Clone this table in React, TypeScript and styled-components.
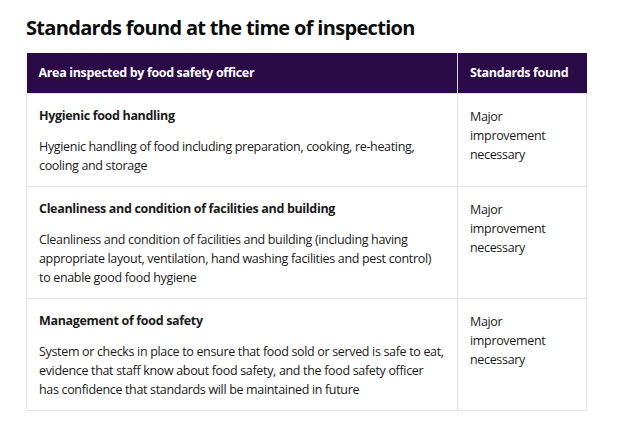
import React from "react";
import styled, { createGlobalStyle } from "styled-components";

const Global = createGlobalStyle`
  html, body { margin: 0; padding: 0; background: #ffffff; }
  body { font-family: "Open Sans", "Liberation Sans", sans-serif; color: #1a1a1a; }
`;

const Page = styled.div`
  padding: 13px 0 0 26px;
  width: 560px;
`;

const Title = styled.h2`
  margin: 0 0 10px 0;
  font-size: 20px;
  line-height: 30px;
  font-weight: 700;
  color: #0b0c0c;
  letter-spacing: -0.68px;
`;

const Table = styled.table`
  width: 560px;
  border-collapse: collapse;
  table-layout: fixed;
`;

const HeadCell = styled.th<{ $w: number }>`
  width: ${(p) => p.$w}px;
  height: 40px;
  padding: 0 12px;
  box-sizing: border-box;
  background: #2a0b48;
  color: #ffffff;
  font-size: 12.5px;
  letter-spacing: -0.35px;
  font-weight: 700;
  text-align: left;
  white-space: nowrap;
  border-left: 1px solid #d9d2e2;
  &:first-child { border-left: none; }
`;

const Cell = styled.td<{ $padTop: number }>`
  vertical-align: top;
  padding: ${(p) => p.$padTop}px 12px 11px 12px;
  border: 1px solid #e3e3e3;
  font-size: 12.5px;
  letter-spacing: -0.33px;
  line-height: 19px;
  white-space: nowrap;
`;

const ItemTitle = styled.div`
  font-weight: 700;
`;

const ItemText = styled.div`
  margin-top: 12px;
`;

const rows = [
  {
    title: "Hygienic food handling",
    text: [
      "Hygienic handling of food including preparation, cooking, re-heating,",
      "cooling and storage",
    ],
  },
  {
    title: "Cleanliness and condition of facilities and building",
    text: [
      "Cleanliness and condition of facilities and building (including having",
      "appropriate layout, ventilation, hand washing facilities and pest control)",
      "to enable good food hygiene",
    ],
  },
  {
    title: "Management of food safety",
    text: [
      "System or checks in place to ensure that food sold or served is safe to eat,",
      "evidence that staff know about food safety, and the food safety officer",
      "has confidence that standards will be maintained in future",
    ],
  },
];

export default function App() {
  return (
    <Page>
      <Global />
      <Title>Standards found at the time of inspection</Title>
      <Table>
        <thead>
          <tr>
            <HeadCell $w={431}>Area inspected by food safety officer</HeadCell>
            <HeadCell $w={129}>Standards found</HeadCell>
          </tr>
        </thead>
        <tbody>
          {rows.map((r) => (
            <tr key={r.title}>
              <Cell $padTop={12}>
                <ItemTitle>{r.title}</ItemTitle>
                <ItemText>
                  {r.text.map((l, i) => (
                    <React.Fragment key={i}>
                      {l}
                      {i < r.text.length - 1 && <br />}
                    </React.Fragment>
                  ))}
                </ItemText>
              </Cell>
              <Cell $padTop={13}>
                Major
                <br />
                improvement
                <br />
                necessary
              </Cell>
            </tr>
          ))}
        </tbody>
      </Table>
    </Page>
  );
}
